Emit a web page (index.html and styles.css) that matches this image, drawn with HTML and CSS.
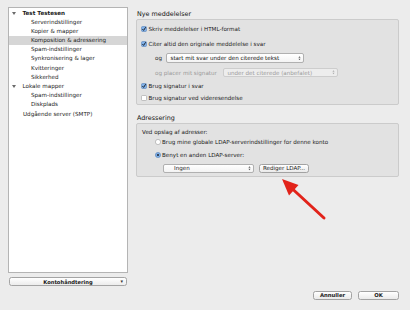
FILE: index.html
```html
<!DOCTYPE html>
<html>
<head>
<meta charset="utf-8">
<link rel="stylesheet" href="styles.css">
</head>
<body>
<div class="window">
  <div class="side">
    <div class="tree">
      <div class="row top"><span class="tri"></span><span class="bold">Test Testesen</span></div>
      <div class="row child">Serverindstillinger</div>
      <div class="row child">Kopier &amp; mapper</div>
      <div class="row child sel">Komposition &amp; adressering</div>
      <div class="row child">Spam-indstillinger</div>
      <div class="row child">Synkronisering &amp; lager</div>
      <div class="row child">Kvitteringer</div>
      <div class="row child">Sikkerhed</div>
      <div class="row top"><span class="tri"></span>Lokale mapper</div>
      <div class="row child">Spam-indstillinger</div>
      <div class="row child">Diskplads</div>
      <div class="row top plain">Udgående server (SMTP)</div>
    </div>
    <div class="popbtn"><span>Kontohåndtering</span><span class="dn">▾</span></div>
  </div>
  <div class="main">
    <div class="gtitle t1">Nye meddelelser</div>
    <div class="box box1">
      <div class="line l1"><svg class="cb" viewBox="0 0 6 6"><rect x="0.5" y="0.5" width="5" height="5" rx="1" class="cbon"/><path d="M1.4 3.1 L2.6 4.4 L4.7 1.2" class="ck"/></svg>Skriv meddelelser i HTML-format</div>
      <div class="line l2"><svg class="cb" viewBox="0 0 6 6"><rect x="0.5" y="0.5" width="5" height="5" rx="1" class="cbon"/><path d="M1.4 3.1 L2.6 4.4 L4.7 1.2" class="ck"/></svg>Citer altid den originale meddelelse i svar</div>
      <div class="line l3 ind"><span class="lbl">og</span><div class="sel1 select"><span>start mit svar under den citerede tekst</span><svg class="ud" viewBox="0 0 4 6"><path d="M2 0.4 L3.4 2.4 H0.6 Z M2 5.6 L3.4 3.6 H0.6 Z"/></svg></div></div>
      <div class="line l4 ind dis"><span class="lbl">og placer mit signatur</span><div class="sel2 select"><span>under det citerede (anbefalet)</span><svg class="ud" viewBox="0 0 4 6"><path d="M2 0.4 L3.4 2.4 H0.6 Z M2 5.6 L3.4 3.6 H0.6 Z"/></svg></div></div>
      <div class="line l5"><svg class="cb" viewBox="0 0 6 6"><rect x="0.5" y="0.5" width="5" height="5" rx="1" class="cbon"/><path d="M1.4 3.1 L2.6 4.4 L4.7 1.2" class="ck"/></svg>Brug signatur i svar</div>
      <div class="line l6"><svg class="cb" viewBox="0 0 6 6"><rect x="0.5" y="0.5" width="5" height="5" rx="1" class="cboff"/></svg>Brug signatur ved videresendelse</div>
    </div>
    <div class="gtitle t2">Adressering</div>
    <div class="box box2">
      <div class="line m1">Ved opslag af adresser:</div>
      <div class="line m2 rind"><svg class="rb" viewBox="0 0 6 6"><circle cx="3" cy="3" r="2.6" class="rboff"/></svg>Brug mine globale LDAP-serverindstillinger for denne konto</div>
      <div class="line m3 rind"><svg class="rb" viewBox="0 0 6 6"><circle cx="3" cy="3" r="2.6" class="rbon"/><circle cx="3" cy="3" r="1" class="dot"/></svg>Benyt en anden LDAP-server:</div>
      <div class="line m4"><div class="sel3 select"><span>Ingen</span><svg class="ud" viewBox="0 0 4 6"><path d="M2 0.4 L3.4 2.4 H0.6 Z M2 5.6 L3.4 3.6 H0.6 Z"/></svg></div><div class="btn ldap">Rediger LDAP...</div></div>
    </div>
    <div class="buttons">
      <div class="btn cancel">Annuller</div>
      <div class="btn ok">OK</div>
    </div>
  </div>
  <svg class="arrow" viewBox="0 0 410 310" width="410" height="310">
    <line x1="324" y1="218" x2="292" y2="188.5" class="shaft"/>
    <polygon points="282,179 298.5,185 289,195.5" class="head"/>
  </svg>
</div>
</body>
</html>
```
FILE: styles.css
```css
html, body {
  margin: 0;
  padding: 0;
}
body {
  width: 410px;
  height: 310px;
  background: #ececec;
  font-family: "DejaVu Sans", "Lucida Grande", sans-serif;
  font-size: 5.6px;
  color: #1a1a1a;
  overflow: hidden;
}
.window {
  position: relative;
  display: flex;
  gap: 8px;
  padding: 7px 11px 0 8px;
  height: 310px;
  box-sizing: border-box;
}
.side {
  width: 120px;
  display: flex;
  flex-direction: column;
}
.tree {
  height: 266px;
  background: #fff;
  border: 1px solid #b4b4b4;
  box-sizing: border-box;
  padding-top: 0.5px;
}
.row {
  height: 9.2px;
  line-height: 9.2px;
  white-space: nowrap;
  display: flex;
  align-items: center;
}
.row.top {
  padding-left: 3px;
}
.row.top.plain {
  padding-left: 14px;
}
.row.child {
  padding-left: 22px;
}
.row.sel {
  background: #d6d6d6;
}
.tri {
  width: 0;
  height: 0;
  border-left: 2.3px solid transparent;
  border-right: 2.3px solid transparent;
  border-top: 3.4px solid #6a6a6a;
  margin-right: 6.5px;
}
.bold {
  font-weight: bold;
}
.popbtn {
  margin-top: 4px;
  margin-left: 1px;
  height: 9px;
  width: 118px;
  box-sizing: border-box;
  border: 1px solid #a4a4a4;
  border-radius: 2.5px;
  background: linear-gradient(#ffffff, #ececec);
  display: flex;
  align-items: center;
  justify-content: center;
  position: relative;
  font-weight: bold;
  font-size: 5.2px;
}
.popbtn .dn {
  position: absolute;
  right: 3px;
  top: 0;
  line-height: 7px;
  font-size: 5px;
  color: #333;
}
.main {
  flex: 1;
  display: flex;
  flex-direction: column;
}
.gtitle {
  height: 9px;
  line-height: 9px;
  font-size: 6.4px;
  padding-left: 1px;
  color: #111;
}
.t1 {
  margin-top: 3px;
}
.t2 {
  margin-top: 8.5px;
}
.box {
  background: #e2e2e2;
  border: 1px solid #cbcbcb;
  border-radius: 2px;
  box-sizing: border-box;
  padding-left: 4px;
}
.box1 {
  height: 86px;
  padding-top: 4px;
}
.box2 {
  height: 54px;
  padding-top: 3.5px;
  padding-left: 5px;
}
.line {
  height: 9px;
  display: flex;
  align-items: center;
  white-space: nowrap;
}
.l2 { margin-top: 6.5px; }
.l3 { margin-top: 4.5px; height: 10px; }
.l4 { margin-top: 4.5px; height: 10px; }
.l5 { margin-top: 4px; }
.l6 { margin-top: 3px; }
.ind {
  padding-left: 14px;
}
.dis {
  color: #9a9a9a;
}
.cb {
  width: 6px;
  height: 6px;
  margin-right: 1.5px;
  flex: none;
}
.cbon {
  fill: #7fb0e8;
  stroke: #5b84b8;
  stroke-width: 0.6;
}
.cboff {
  fill: #ffffff;
  stroke: #a0a0a0;
  stroke-width: 0.6;
}
.ck {
  fill: none;
  stroke: #1c2430;
  stroke-width: 1;
}
.select {
  height: 9.5px;
  box-sizing: border-box;
  border: 1px solid #b0b0b0;
  border-radius: 2px;
  background: linear-gradient(#ffffff, #f3f3f3);
  display: flex;
  align-items: center;
  justify-content: space-between;
  padding: 0 2px 0 3.5px;
}
.ud {
  width: 3px;
  height: 4.5px;
  fill: #555;
}
.sel1 {
  margin-left: 4px;
  width: 138px;
  color: #111;
}
.sel2 {
  margin-left: 6px;
  width: 115px;
  background: #ededed;
  border-color: #cdcdcd;
}
.sel2 .ud {
  fill: #aaa;
}
.m2 { margin-top: 1px; }
.m3 { margin-top: 4px; }
.m4 { margin-top: 4.5px; height: 9.5px; padding-left: 21px; }
.rind {
  padding-left: 13px;
}
.rb {
  width: 6px;
  height: 6px;
  margin-right: 1px;
  flex: none;
}
.rboff {
  fill: #fff;
  stroke: #9c9c9c;
  stroke-width: 0.6;
}
.rbon {
  fill: #7fb0e8;
  stroke: #5b84b8;
  stroke-width: 0.6;
}
.dot {
  fill: #1c2430;
}
.sel3 {
  width: 91px;
  padding-left: 10px;
}
.btn {
  height: 9px;
  box-sizing: border-box;
  border: 1px solid #a2a2a2;
  border-radius: 2.5px;
  background: linear-gradient(#ffffff, #eaeaea);
  display: flex;
  align-items: center;
  justify-content: center;
  white-space: nowrap;
}
.ldap {
  width: 50px;
  margin-left: 5px;
  height: 9.5px;
}
.buttons {
  margin-top: auto;
  margin-bottom: 10px;
  display: flex;
  justify-content: flex-end;
  gap: 6px;
}
.cancel {
  width: 39px;
  height: 9.5px;
  font-weight: bold;
  font-size: 5.3px;
}
.ok {
  width: 41px;
  height: 9.5px;
  font-weight: bold;
  font-size: 5.3px;
}
.arrow {
  position: absolute;
  left: 0;
  top: 0;
  pointer-events: none;
}
.shaft {
  stroke: #e2231a;
  stroke-width: 3;
  stroke-linecap: round;
}
.head {
  fill: #e2231a;
}
```
